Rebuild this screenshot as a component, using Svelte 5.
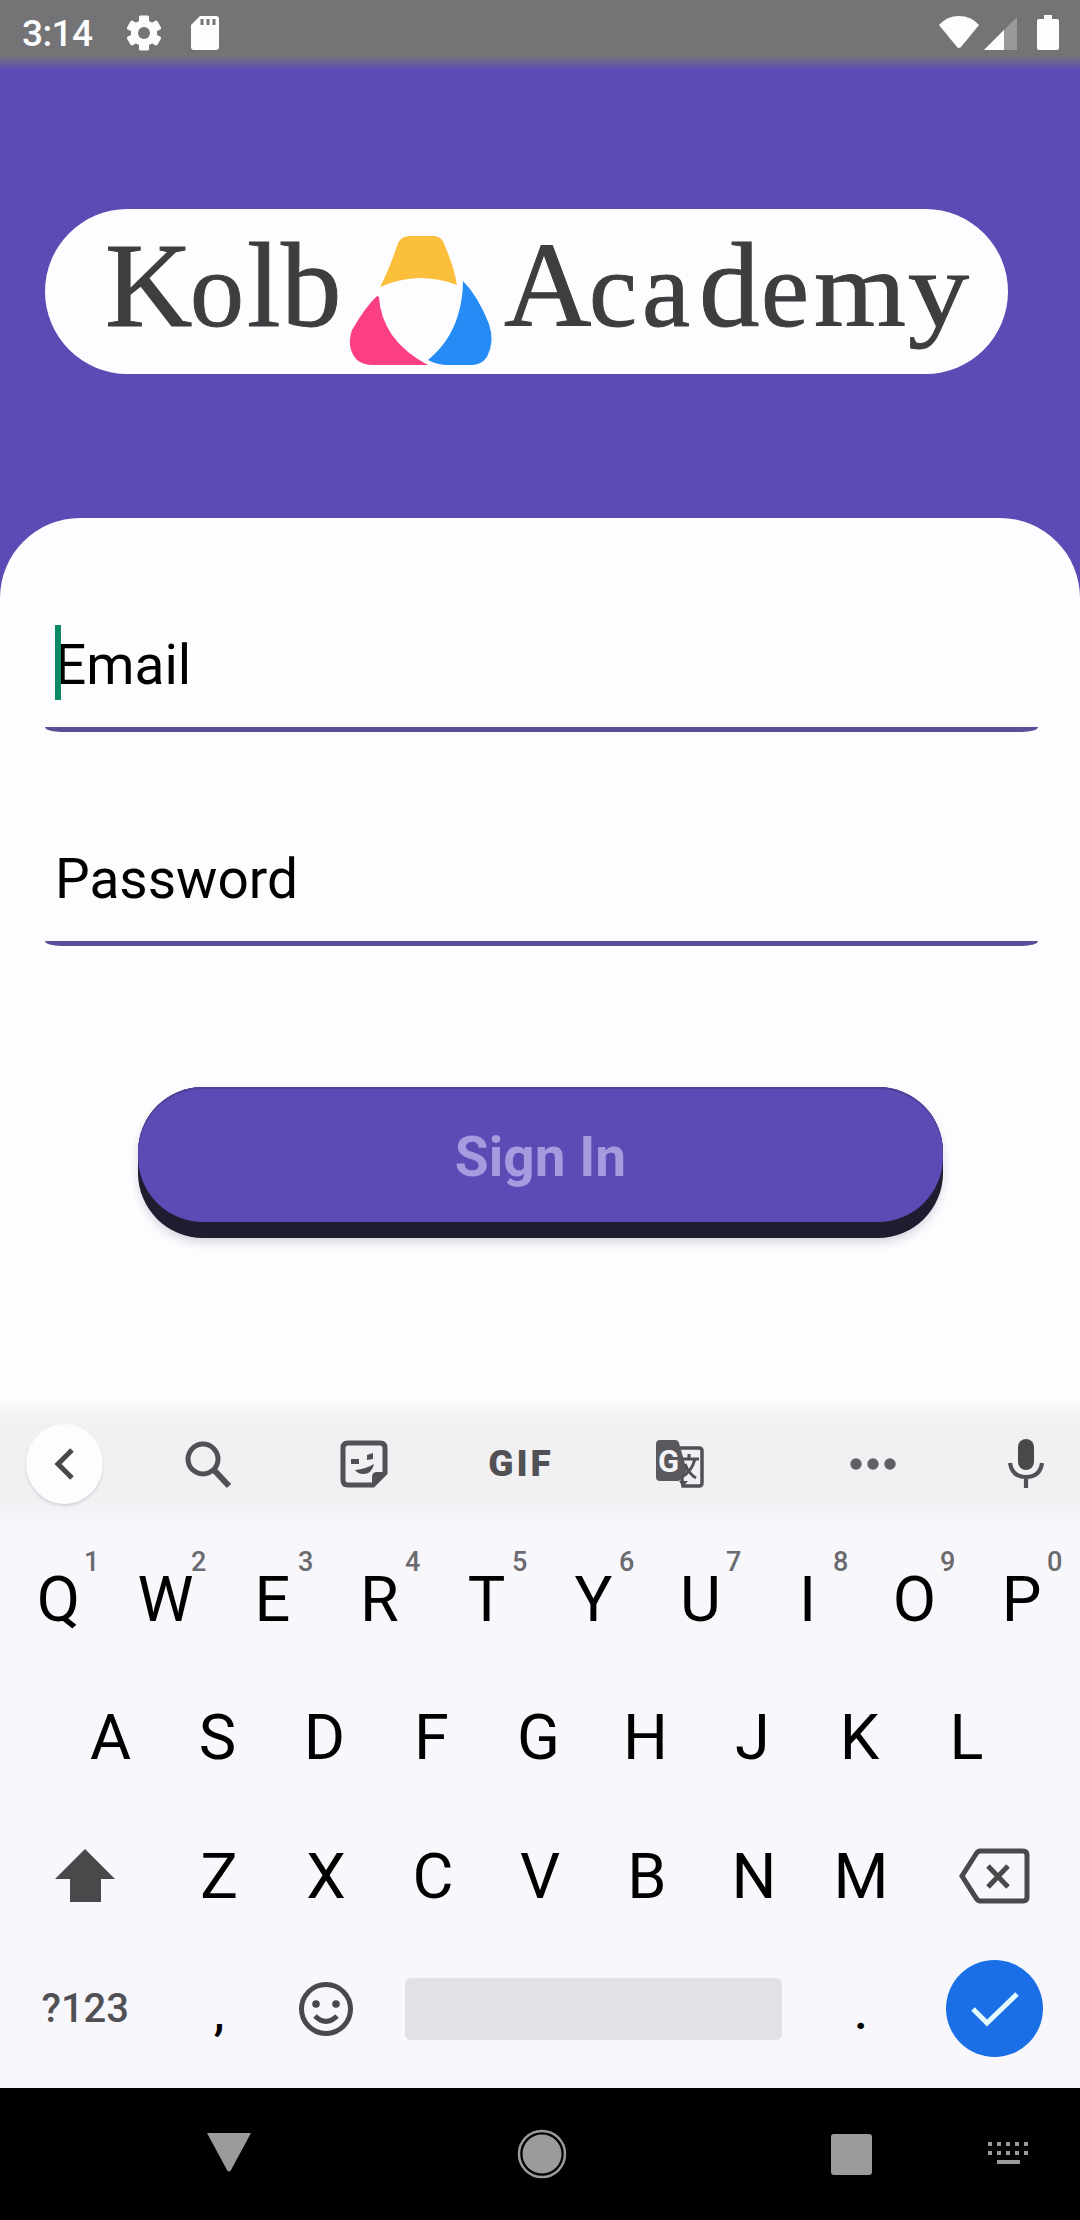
<script>
  const topRow = [...'QWERTYUIOP'].map((letter, i) => ({ letter, digit: (i + 1) % 10 }));
  const middleRow = [...'ASDFGHJKL'];
  const bottomRow = [...'ZXCVBNM'];
  const keypadDots = [2, 11, 20, 29, 38];
</script>

<div class="screen">
  <header class="status">
    <span class="clock">3:14</span>
    <svg class="gear" width="36" height="36" viewBox="0 0 36 36">
      <g fill="#fdfdff">
        <rect x="13" y="0.5" width="10" height="35" rx="1.5" />
        <rect x="13" y="0.5" width="10" height="35" rx="1.5" transform="rotate(60 18 18)" />
        <rect x="13" y="0.5" width="10" height="35" rx="1.5" transform="rotate(120 18 18)" />
        <circle cx="18" cy="18" r="13" />
      </g>
      <circle cx="18" cy="18" r="6" fill="#747477" />
    </svg>
    <svg class="card" width="30" height="36" viewBox="0 0 30 36">
      <path d="M10 1h16q3 0 3 3v28q0 3-3 3H4q-3 0-3-3V10z" fill="#fdfdff" />
      <path d="M12 4v6M18 4v6M24 4v6" stroke="#77777a" stroke-width="3" />
    </svg>
    <span class="grow"></span>
    <svg width="42" height="34" viewBox="0 0 42 34"><path d="M1 9Q9 0 21 0T41 9L23 31q-2 2-4 0z" fill="#fdfdff" /></svg>
    <svg class="signal" width="34" height="34" viewBox="0 0 34 34">
      <path d="M0 34 33 1V34z" fill="#99999c" />
      <path d="M0 34 20 14V34z" fill="#fdfdff" />
    </svg>
    <svg class="battery" width="22" height="36" viewBox="0 0 22 36"><path d="M7 0h8v4h5q2 0 2 2v27q0 2-2 2H2q-2 0-2-2V6q0-2 2-2h5z" fill="#fdfdff" /></svg>
  </header>

  <section class="hero">
    <svg class="logo" width="963" height="165" viewBox="45 209 963 165" role="img" aria-label="Kolb Academy">
      <g class="wordmark">
        <text y="326"><tspan x="105">K</tspan><tspan class="small" x="190">o</tspan><tspan x="247">l</tspan><tspan x="281">b</tspan></text>
        <text y="326"><tspan x="504">A</tspan><tspan class="small" x="589">c</tspan><tspan class="small" x="642">a</tspan><tspan x="699">d</tspan><tspan class="small" x="761">e</tspan><tspan class="small" x="814" textLength="92" lengthAdjust="spacingAndGlyphs">m</tspan><tspan class="small" x="908" textLength="61" lengthAdjust="spacingAndGlyphs">y</tspan></text>
      </g>
      <path d="M380 287Q389 270 397 246Q400 236 409 236H434Q442 236 445 246Q454 267 457 285Q440 278 418 278Q398 279 380 287z" fill="#fbbf3c" />
      <path d="M377 296Q366 306 352 330Q346 348 357 360Q363 365 373 365H428Q405 353 392 335Q380 317 379 297z" fill="#fc3f84" />
      <path d="M463 281Q478 296 489 324Q495 342 487 357Q481 365 472 365H445Q435 364 428 360Q450 342 458 315Q463 298 463 281z" fill="#258cf5" />
    </svg>
  </section>

  <main class="sheet">
    <div class="field"><i class="caret"></i><span>Email</span></div>
    <div class="field"><span>Password</span></div>
    <button class="sign-in"><span>Sign In</span></button>
  </main>

  <section class="keyboard">
    <div class="tools">
      <div class="back">
        <svg width="24" height="36" viewBox="0 0 24 36"><path d="M20 4 6 18l14 14" fill="none" stroke="#49494c" stroke-width="5" /></svg>
      </div>
      <svg width="48" height="50" viewBox="0 0 48 50"><circle cx="19" cy="20" r="15" /><path d="m30 31 15 16" stroke-width="6" /></svg>
      <svg width="48" height="50" viewBox="0 0 48 50">
        <path d="M8 4h32q5 0 5 5v25L33 46H8q-5 0-5-5V9q0-5 5-5z" />
        <path d="M33 46V38q0-4 4-4h8z" fill="#515155" stroke-width="2" />
        <path d="M11 20h8v5h-8zM27 16l6-2v6l-6 1zM15 31q11-1 19-6-2 10-11 10-5 0-8-4z" fill="#515155" stroke="none" />
      </svg>
      <span class="gif">GIF</span>
      <svg width="50" height="50" viewBox="0 0 50 50">
        <path d="M22 9h22q3 0 3 3v32q0 3-3 3H28z" fill="#f1f1f4" stroke-width="3.5" />
        <path d="M5 1h15q3 0 4 3l8 28-8 10H5q-4 0-4-4V5q0-4 4-4z" fill="#59595d" stroke="none" />
        <path d="M24 42h9l-5 6z" fill="#515155" stroke="none" />
        <text class="g" x="3" y="33">G</text>
        <path d="M26 20h18M34 15v5M40 20q-3 12-13 18M30 25q4 10 11 14" stroke-width="3" />
      </svg>
      <svg width="46" height="12" viewBox="0 0 46 12"><g fill="#606064" stroke="none"><circle cx="6" cy="6" r="5.7" /><circle cx="23" cy="6" r="5.7" /><circle cx="40" cy="6" r="5.7" /></g></svg>
      <svg width="38" height="50" viewBox="0 0 38 50">
        <rect x="11" y="0" width="16" height="31" rx="8" fill="#49494c" stroke="none" />
        <path d="M3 24q2 14 16 14t16-14M19 38v11" stroke-width="4.2" />
      </svg>
    </div>

    <div class="row">
      {#each topRow as key}
        <div class="key">{key.letter}<sup>{key.digit}</sup></div>
      {/each}
    </div>
    <div class="row middle">
      {#each middleRow as letter}
        <div class="key">{letter}</div>
      {/each}
    </div>
    <div class="row">
      <div class="key side">
        <svg width="60" height="54" viewBox="0 0 60 54"><path d="M30 0 60 30H46V53H15V30H0z" fill="#49494c" /></svg>
      </div>
      {#each bottomRow as letter}
        <div class="key">{letter}</div>
      {/each}
      <div class="key side">
        <svg width="72" height="56" viewBox="0 0 72 56"><path d="M21 3h43q4 0 4 4v42q0 4-4 4H21q-2 0-4-3L3 28 17 6q2-3 4-3zM29 18l20 21M49 18 29 39" fill="none" stroke="#49494c" stroke-width="5" /></svg>
      </div>
    </div>
    <div class="row last">
      <div class="key side symbols">?123</div>
      <div class="key mark">,</div>
      <div class="key">
        <svg width="56" height="56" viewBox="0 0 56 56">
          <circle cx="28" cy="28" r="24.5" fill="none" stroke="#49494c" stroke-width="5" />
          <circle cx="18" cy="23" r="3.8" fill="#49494c" /><circle cx="38" cy="23" r="3.8" fill="#49494c" />
          <path d="M17 35q11 11 22 0" fill="none" stroke="#49494c" stroke-width="5" />
        </svg>
      </div>
      <div class="space-cell"><div class="space"></div></div>
      <div class="key mark">.</div>
      <div class="key side">
        <div class="done"><svg width="50" height="38" viewBox="0 0 50 38"><path d="m3 19 14 14L47 4" fill="none" stroke="#e4fcff" stroke-width="5" /></svg></div>
      </div>
    </div>
  </section>

  <nav class="nav">
    <svg class="nav-back" width="44" height="40" viewBox="0 0 44 40"><path d="M0 1h44L24 38q-2 3-4 0z" fill="#9c9a9d" /></svg>
    <svg class="nav-home" width="50" height="50" viewBox="0 0 50 50"><circle cx="25" cy="25" r="23" fill="none" stroke="#9c9a9d" stroke-width="2.5" /><circle cx="25" cy="25" r="19.5" fill="#9c9a9d" /></svg>
    <div class="nav-recent"></div>
    <svg class="nav-keys" width="44" height="26" viewBox="0 0 44 26">
      <g fill="#9c9a9d">
        {#each keypadDots as x}
          <rect {x} y="1" width="4" height="4" /><rect {x} y="10" width="4" height="4" />
        {/each}
        <rect x="11" y="19" width="23" height="4" />
      </g>
    </svg>
  </nav>
</div>

<style>
  :global(body) { margin: 0; background: #5c4ab5; }
  .screen { width: 1080px; height: 2220px; display: flex; flex-direction: column; overflow: hidden; background: #5c4ab5; font-family: Roboto, sans-serif; color: #000; }
  svg { display: block; flex: none; }
  .grow { flex: 1; }

  .status { height: 70px; box-sizing: border-box; padding: 0 21px 4px 22px; display: flex; align-items: center; background: linear-gradient(#747477 0, #747477 56px, #5c4ab5 70px); }
  .clock { width: 104px; padding-top: 2px; font-size: 37px; font-weight: 500; line-height: 44px; letter-spacing: -.6px; color: #fdfdff; }
  .card { margin-left: 28px; }
  .signal { margin-left: 4px; }
  .battery { margin-left: 19px; }

  .hero { height: 448px; box-sizing: border-box; padding: 139px 0 0 45px; }
  .logo { background: #fdfdff; border-radius: 83px; }
  .wordmark { font-family: "Liberation Serif", serif; font-size: 121px; fill: #3e3e41; stroke: #3e3e41; stroke-width: 1px; }
  .small { font-size: 108px; }

  .sheet { height: 881px; box-sizing: border-box; padding: 67px 42px 0 45px; background: #fdfdff; border-radius: 80px 80px 0 0; display: flex; flex-direction: column; }
  .field { position: relative; height: 147px; box-sizing: border-box; margin-bottom: 67px; padding: 48px 0 0 10px; border-bottom: 5px solid #5c4d96; border-radius: 0 0 16px 16px / 0 0 5px 5px; font-size: 55px; line-height: 64px; }
  .caret { position: absolute; left: 10px; top: 40px; width: 6px; height: 75px; background: #078a65; }
  .sign-in { flex: none; width: 805px; height: 151px; margin: 74px 0 0 93px; padding: 0; border: 0; border-radius: 65px; background: #211b30; box-shadow: 0 5px 9px rgba(40, 30, 80, .16); font-family: inherit; overflow: visible; }
  .sign-in span { display: flex; align-items: center; justify-content: center; height: 135px; margin-bottom: 16px; padding-top: 5px; box-sizing: border-box; border-radius: 65px; background: #5c4ab5; box-shadow: inset 0 2px #4f419a; font-size: 55px; font-weight: 700; color: #a79ade; }

  .keyboard { height: 689px; background: #f8f8fc; }
  .tools { height: 131px; padding-bottom: 2px; box-sizing: border-box; display: grid; grid-template-columns: 128px 160px 152px 159px 162px 224px 82px; align-items: center; justify-items: center; background: linear-gradient(#fbfbfe 0, #f1f1f4 22px, #f1f1f4 100px, #f8f8fc 131px); }
  .tools svg { fill: none; stroke: #515155; stroke-width: 5; }
  .back { width: 77px; height: 80px; border-radius: 50%; background: #fdfdff; display: flex; align-items: center; justify-content: center; box-shadow: 0 2px 3px rgba(60, 60, 70, .16); }
  .gif { font-size: 37px; font-weight: 900; letter-spacing: 3px; padding-left: 3px; color: #515155; line-height: 40px; }
  .g { font-size: 31px; font-weight: 700; fill: #f5f5f8; stroke: none; }

  .row { height: 138.5px; display: flex; justify-content: center; padding: 0 5px; }
  .row.middle { padding-right: 8px; }
  .row.last { height: 125px; padding-top: 1px; box-sizing: border-box; }
  .key { position: relative; width: 107px; display: flex; align-items: center; justify-content: center; font-size: 63px; }
  .side { width: 160.5px; }
  .key sup { position: absolute; left: 79px; top: 16px; font-size: 27px; line-height: 32px; font-weight: 500; color: #6a6a6f; }
  .symbols { font-size: 40px; font-weight: 500; color: #515155; }
  .mark { font-size: 48px; font-weight: 500; padding-top: 7px; box-sizing: border-box; }
  .space-cell { width: 428px; display: flex; align-items: center; justify-content: center; }
  .space { width: 377px; height: 62px; border-radius: 6px; background: #e2e2e6; }
  .done { width: 97px; height: 97px; border-radius: 50%; background: #1b6fe6; display: flex; align-items: center; justify-content: center; }

  .nav { flex: 1; background: #000; display: flex; align-items: center; }
  .nav-back { margin: 0 266px 5px 207px; }
  .nav-recent { width: 41px; height: 41px; border-radius: 3px; background: #9c9a9d; margin: 0 114px 0 264px; }
</style>
